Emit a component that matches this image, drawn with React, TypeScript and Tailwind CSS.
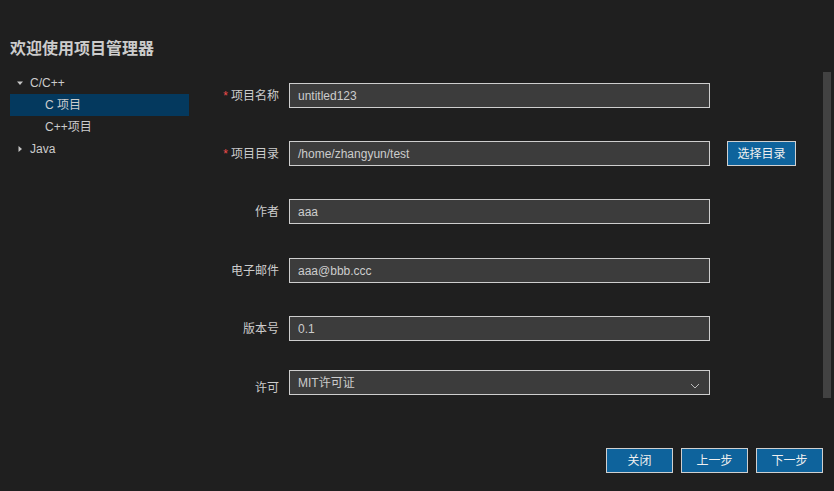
import { useState } from "react";

const FONT = "font-['Liberation_Sans','Noto_Sans_CJK_SC',sans-serif]";

const FIELDS: { label: string; value: string; required?: boolean; browse?: boolean; gap: string }[] = [
  { label: "项目名称", value: "untitled123", required: true, gap: "mt-[11px]" },
  { label: "项目目录", value: "/home/zhangyun/test", required: true, browse: true, gap: "mt-[33px]" },
  { label: "作者", value: "aaa", gap: "mt-[33px]" },
  { label: "电子邮件", value: "aaa@bbb.ccc", gap: "mt-[34px]" },
  { label: "版本号", value: "0.1", gap: "mt-[33px]" },
];

function TreeRow({
  label,
  depth,
  arrow,
  selected,
}: {
  label: string;
  depth: number;
  arrow?: "open" | "closed";
  selected?: boolean;
}) {
  return (
    <div
      className={`h-[22px] flex items-center text-[12px] text-[#cccccc] ${
        selected ? "bg-[#04395e]" : ""
      }`}
    >
      <span className={depth === 0 ? "w-[20px] flex justify-center" : "w-[35px]"}>
        {arrow === "open" && (
          <svg width="8" height="8" viewBox="0 0 8 8">
            <polygon points="1,2.5 7,2.5 4,6" fill="#c5c5c5" />
          </svg>
        )}
        {arrow === "closed" && (
          <svg width="8" height="8" viewBox="0 0 8 8">
            <polygon points="2.5,1 6,4 2.5,7" fill="#c5c5c5" />
          </svg>
        )}
      </span>
      <span>{label}</span>
    </div>
  );
}

function Button({ children, className = "" }: { children: string; className?: string }) {
  return (
    <button
      className={`h-[25px] bg-[#0e639c] border border-[#d0d0d0] text-[12px] text-[#f0f0f0] flex items-center justify-center ${className}`}
    >
      {children}
    </button>
  );
}

export default function App() {
  const [selected] = useState("c");

  return (
    <div className={`w-[834px] h-[491px] bg-[#1f1f1f] flex flex-col ${FONT}`}>
      {/* Title */}
      <div className="h-[72px] pt-[38px] px-[10px]">
        <h1 className="text-[16px] leading-[22px] font-bold text-[#cccccc]">欢迎使用项目管理器</h1>
      </div>

      <div className="flex h-[326px]">
        {/* Tree */}
        <div className="w-[179px] ml-[10px]">
          <TreeRow label="C/C++" depth={0} arrow="open" />
          <TreeRow label="C 项目" depth={1} selected={selected === "c"} />
          <TreeRow label="C++项目" depth={1} />
          <TreeRow label="Java" depth={0} arrow="closed" />
        </div>

        {/* Form */}
        <div className="flex-1 flex ml-[11px] pr-[3px]">
          <div className="flex-1 flex flex-col">
            {FIELDS.map((f) => (
              <div key={f.label} className={`flex items-center h-[25px] ${f.gap}`}>
                <div className="w-[79px] text-right text-[12px] text-[#cccccc]">
                  {f.required && <span className="text-[#f14c4c] mr-[3px]">*</span>}
                  {f.label}
                </div>
                <div className="ml-[10px] w-[421px] h-[25px] bg-[#3c3c3c] border border-[#cecece] flex items-center pl-[8px] text-[12px] text-[#cccccc]">
                  {f.value}
                </div>
                {f.browse && <Button className="ml-[17px] w-[69px]">选择目录</Button>}
              </div>
            ))}

            <div className="flex mt-[29px] h-[25px]">
              <div className="w-[79px] text-right text-[12px] text-[#cccccc] pt-[9px]">许可</div>
              <div className="ml-[10px] w-[421px] h-[25px] bg-[#3c3c3c] border border-[#cecece] flex items-center justify-between pl-[8px] pr-[9px] text-[12px] text-[#cccccc]">
                <span>MIT许可证</span>
                <svg width="10" height="6" viewBox="0 0 10 6" className="mt-[7px]">
                  <polyline points="1,1 5,5 9,1" fill="none" stroke="#bbbbbb" strokeWidth="1" />
                </svg>
              </div>
            </div>
          </div>

          {/* Scrollbar */}
          <div className="w-[8px] h-full bg-[#424242]" />
        </div>
      </div>

      {/* Footer */}
      <div className="flex justify-end gap-[8px] pr-[11px] mt-[50px]">
        <Button className="w-[67px]">关闭</Button>
        <Button className="w-[67px]">上一步</Button>
        <Button className="w-[67px]">下一步</Button>
      </div>
    </div>
  );
}
